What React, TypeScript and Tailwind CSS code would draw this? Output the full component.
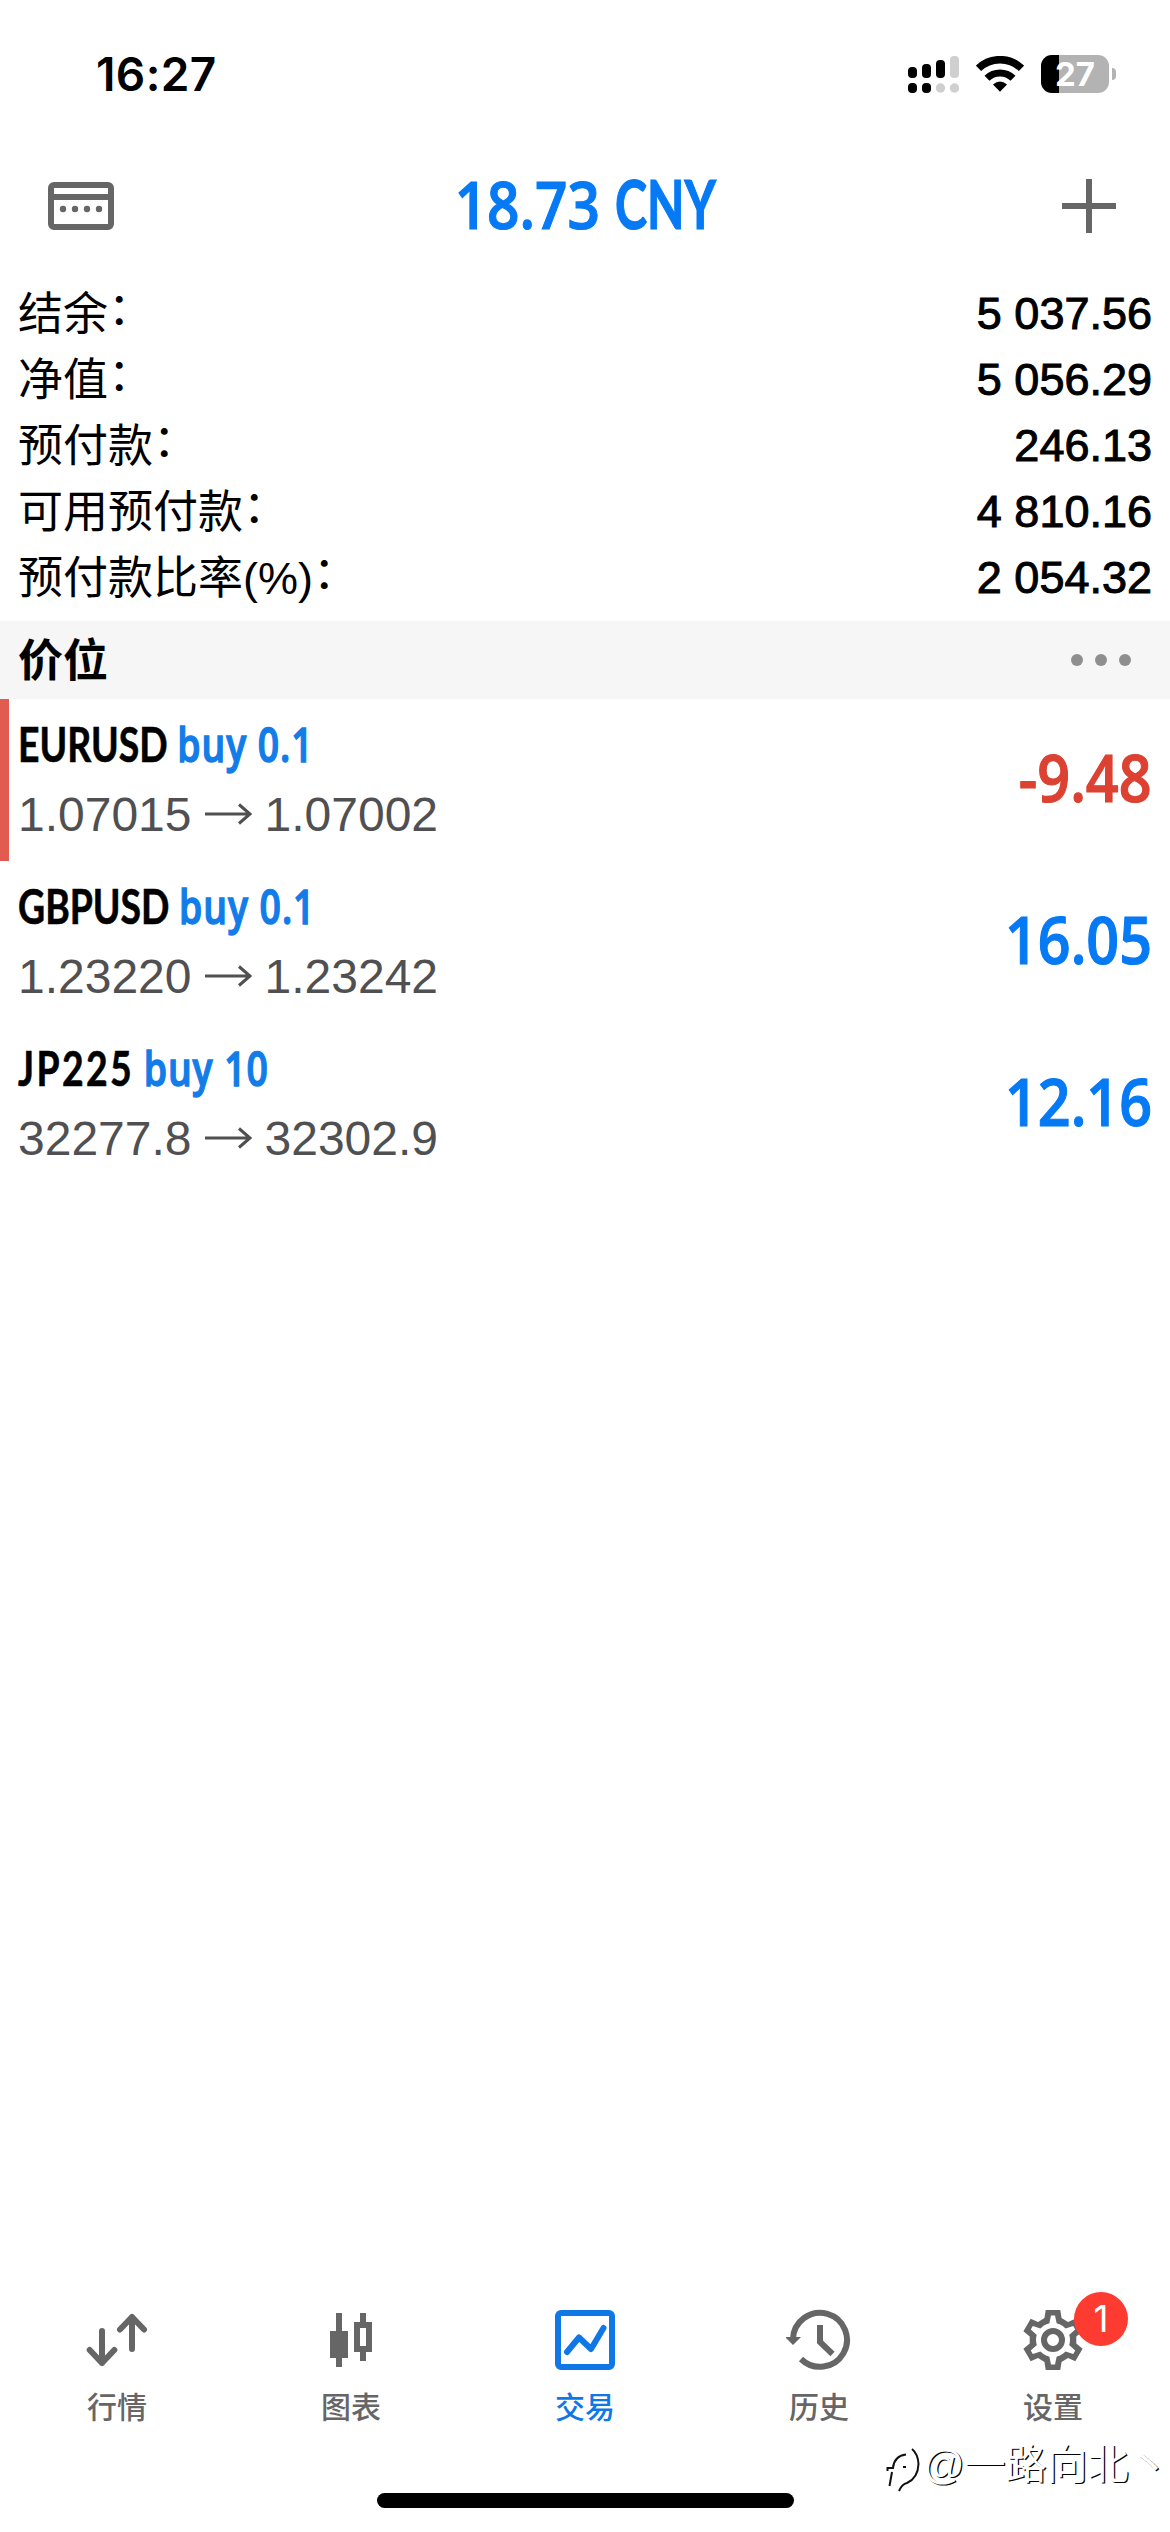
import type { ReactNode } from "react";
import clsx from "clsx";

type Position = {
  symbol: string;
  side: string;
  open: string;
  current: string;
  profit: string;
  loss?: boolean;
};

const summary = [
  { label: "结余", value: "5 037.56" },
  { label: "净值", value: "5 056.29" },
  { label: "预付款", value: "246.13" },
  { label: "可用预付款", value: "4 810.16" },
  { label: "预付款比率(%)", value: "2 054.32" },
];

const positions: Position[] = [
  { symbol: "EURUSD", side: "buy 0.1", open: "1.07015", current: "1.07002", profit: "-9.48", loss: true },
  { symbol: "GBPUSD", side: "buy 0.1", open: "1.23220", current: "1.23242", profit: "16.05" },
  { symbol: "JP225", side: "buy 10", open: "32277.8", current: "32302.9", profit: "12.16" },
];

function StatusBar() {
  return (
    <div className="h-[148px] pl-[96px] pr-[54px] flex items-center justify-between">
      <span className="font-['Inter'] font-semibold text-[46px] leading-none tracking-[0.4px]">16:27</span>
      <div className="flex items-center">
        <svg className="w-[51px] h-[38px]" viewBox="0 0 51 38">
          <rect x="0" y="12" width="9" height="11" rx="4" />
          <rect x="14" y="9" width="9" height="14" rx="4" />
          <rect x="28" y="5" width="9" height="18" rx="4" />
          <rect x="42" y="1" width="9" height="22" rx="4" fill="#cfcfcf" />
          <rect x="0" y="28" width="9" height="10" rx="4" />
          <rect x="14" y="28" width="9" height="10" rx="4" />
          <circle cx="32.5" cy="33" r="4.7" fill="#cfcfcf" />
          <circle cx="46.5" cy="33" r="4.7" fill="#cfcfcf" />
        </svg>
        <svg className="ml-[17px] w-[48px] h-[36px]" viewBox="0 0 48 36">
          <path d="M2.500 12.300A31 31 0 0 1 45.500 12.300" fill="none" stroke="#000" strokeWidth="7.5" />
          <path d="M11 22.300A18.500 18.500 0 0 1 37 22.300" fill="none" stroke="#000" strokeWidth="7" />
          <path d="M17 28.500Q24 22.500 31 28.500L24 35.800Z" />
        </svg>
        <div className="ml-[17px] relative w-[68px] h-[38px] rounded-[11px] overflow-hidden bg-[#b3b3b3]">
          <div className="w-[18px] h-full bg-black" />
          <span className="absolute inset-0 text-center font-['Inter'] font-bold text-[33px] leading-[38px] text-white">
            27
          </span>
        </div>
        <div className="ml-[3px] w-[4px] h-[12px] rounded-r-full bg-[#b3b3b3]" />
      </div>
    </div>
  );
}

function Header() {
  return (
    <header className="h-[116px] pl-[48px] pr-[49px] flex items-center justify-between text-[#666]">
      <svg className="w-[72px] h-[48px]" viewBox="0 0 72 48" fill="none" stroke="currentColor" strokeWidth="6">
        <rect x="3" y="3" width="60" height="42" rx="3" />
        <path d="M3 15H63" />
        <g fill="currentColor" stroke="none">
          <circle cx="15" cy="27" r="3.200" />
          <circle cx="27" cy="27" r="3.200" />
          <circle cx="39" cy="27" r="3.200" />
          <circle cx="51" cy="27" r="3.200" />
        </g>
      </svg>
      <h1 className="flex items-baseline gap-[15px] pl-[6px] pb-[6px] text-[66px] leading-none text-[#067af4] whitespace-nowrap [-webkit-text-stroke:1.2px_currentColor]">
        <span className="font-['Open_Sans'] font-semibold origin-right scale-x-[0.86]">18.73</span>
        <span className="font-['Lato'] font-bold origin-left scale-x-[0.735]">CNY</span>
      </h1>
      <svg className="w-[63px] h-[54px]" viewBox="0 0 63 54" stroke="currentColor" strokeWidth="6">
        <path d="M4 27H58M31 0V54" />
      </svg>
    </header>
  );
}

function PositionRow({ position }: { position: Position }) {
  return (
    <div
      className={clsx(
        "h-[162px] border-l-[9px] pl-[9px] pr-[18px] flex items-center justify-between",
        position.loss ? "border-[#e25b50]" : "border-transparent"
      )}
    >
      <div className="pb-[2px]">
        <p className="text-[47px] leading-[69px] origin-left scale-x-[0.795] whitespace-nowrap">
          <span
            className={clsx(
              "font-['Lato'] font-bold [-webkit-text-stroke:0.6px_currentColor]",
              /\d/.test(position.symbol) && "tracking-[3px]"
            )}
          >
            {position.symbol}
          </span>
          <span className="ml-[12px] font-['Open_Sans'] font-semibold tracking-[1.2px] text-[#127ce8] [-webkit-text-stroke:1.4px_currentColor]">
            {position.side}
          </span>
        </p>
        <p className="flex items-center text-[48px] leading-[69px] text-[#505052]">
          {position.open}
          <svg className="mx-[13px] w-[47px] h-[22px]" viewBox="0 0 47 22" fill="none" stroke="currentColor" strokeWidth="3">
            <path d="M0 11H45M34 1.500L45 11L34 20.500" />
          </svg>
          {position.current}
        </p>
      </div>
      <span
        className={clsx(
          "pb-[8px] font-['Open_Sans'] font-semibold text-[66px] leading-none origin-right scale-x-[0.87] [-webkit-text-stroke:1.2px_currentColor]",
          position.loss ? "text-[#dc4132]" : "text-[#067af4]"
        )}
      >
        {position.profit}
      </span>
    </div>
  );
}

function Tab({ label, active, badge, children }: { label: string; active?: boolean; badge?: string; children: ReactNode }) {
  return (
    <div className={clsx("flex-1 flex flex-col items-center", active ? "text-[#0f78e6]" : "text-[#666]")}>
      <div className="relative">
        <svg className="w-[66px] h-[66px]" viewBox="0 0 66 66" fill="none" stroke="currentColor" strokeWidth="6">
          {children}
        </svg>
        {badge && (
          <span className="absolute left-[54px] top-[-15px] w-[54px] h-[54px] rounded-full bg-[#fd3b31] text-white text-center font-['Inter'] text-[37px] leading-[54px]">
            {badge}
          </span>
        )}
      </div>
      <span className="mt-[13px] text-[30px] leading-[44px] font-medium">{label}</span>
    </div>
  );
}

const spokes = [0, 60, 120, 180, 240, 300];

function TabBar() {
  return (
    <nav className="flex h-[186px]">
      <Tab label="行情">
        <path strokeLinecap="round" strokeLinejoin="round" d="M18 24V56M5.700 43L18 56L30.300 43M48 42V10M36 22.500L48 10L60 22.500" />
      </Tab>
      <Tab label="图表">
        <path d="M21 6V60M45 6V18M45 42V54" />
        <path d="M12 24H30V51H12Z" fill="currentColor" stroke="none" />
        <path d="M39 18H51V42H39Z" />
      </Tab>
      <Tab label="交易" active>
        <rect x="6" y="6" width="54" height="54" rx="3" />
        <path strokeLinecap="round" strokeLinejoin="round" d="M15 45L27 30.500L39 42L51.500 21" />
      </Tab>
      <Tab label="历史">
        <path d="M15 52A27 27 0 1 0 7 32" />
        <path d="M-1 30H15L7 38Z" fill="currentColor" stroke="none" />
        <path d="M34 18V35L46.500 47" />
      </Tab>
      <Tab label="设置" badge="1">
        <g transform="translate(33 33)" stroke="none" fill="currentColor">
          <path d="M-7.300-30H7.300L8.500-22L15-17.900L22.300-21.300L29.600-8.700L23.300-3.600V3.600L29.600 8.700L22.300 21.300L15 17.900L8.500 22L7.300 30H-7.300L-8.500 22L-15 17.900L-22.300 21.300L-29.600 8.700L-23.300 3.600V-3.600L-29.600-8.700L-22.300-21.300L-15-17.900L-8.500-22Z" />
          <circle r="17" fill="#fff" />
          {spokes.map((angle) => (
            <path key={angle} d="M-2-24.500H2L4-15H-4Z" fill="#fff" transform={`rotate(${angle})`} />
          ))}
          <circle r="9" fill="none" stroke="currentColor" strokeWidth="6" />
        </g>
      </Tab>
    </nav>
  );
}

export default function App() {
  return (
    <div className="relative w-[1170px] h-[2532px] flex flex-col overflow-hidden bg-white text-black font-['Liberation_Sans','Noto_Sans_CJK_SC',sans-serif]">
      <StatusBar />
      <Header />

      {/* Account summary */}
      <section className="pt-[17px] pb-[10px] px-[18px]">
        {summary.map((row) => (
          <div key={row.label} className="h-[66px] flex items-center justify-between text-[45px] leading-[66px]">
            <span className="pt-px flex">
              {row.label}
              <span className="-mt-[5px]">：</span>
            </span>
            <span className="[-webkit-text-stroke:1px_#000]">{row.value}</span>
          </div>
        ))}
      </section>

      {/* Positions */}
      <div className="h-[78px] pl-[18px] pr-[39px] flex items-center justify-between bg-[#f6f6f6]">
        <h2 className="pt-[3px] text-[45px] leading-none font-bold">价位</h2>
        <div className="flex gap-3">
          {[0, 1, 2].map((dot) => (
            <span key={dot} className="w-3 h-3 rounded-full bg-[#8f8f8f]" />
          ))}
        </div>
      </div>
      <main className="flex-1">
        {positions.map((position) => (
          <PositionRow key={position.symbol} position={position} />
        ))}
      </main>

      <TabBar />
      <div className="h-[39px] flex justify-center">
        <div className="w-[417px] h-[15px] rounded-full bg-black" />
      </div>

      {/* Watermark */}
      <div className="absolute left-[885px] top-[2438px] flex items-center text-white">
        <svg className="w-[38px] h-[54px]" viewBox="0 0 38 54" fill="none" stroke="#111" strokeWidth="2">
          <path d="M2.500 33V30H8Q9 18 21 16.500M7 34L4.500 48M27 11Q33 16 33.500 26Q33 40 22 45Q17 46 14 53M18 29H21" />
        </svg>
        <span className="text-[41px] leading-[50px] whitespace-nowrap [text-shadow:1.2px_1.2px_0_#000]">@一路向北丶</span>
      </div>
    </div>
  );
}
